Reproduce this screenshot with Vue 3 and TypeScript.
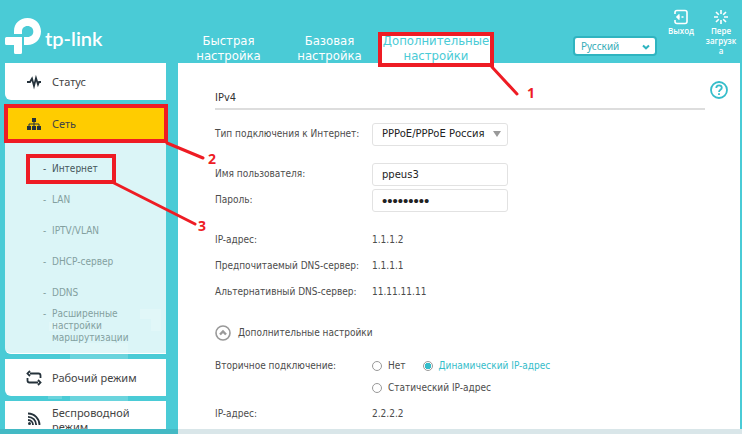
<script setup lang="ts">
import { ref } from 'vue'

interface NavTab {
  first: string
  second: string
  active?: boolean
}

const tabs: NavTab[] = [
  { first: 'Быстрая', second: 'настройка' },
  { first: 'Базовая', second: 'настройка' },
  { first: 'Дополнительные', second: 'настройки', active: true },
]

const submenu: string[] = ['Интернет', 'LAN', 'IPTV/VLAN', 'DHCP-сервер', 'DDNS', 'Расширенные настройки маршрутизации']

const language = ref('Русский')
const connectionType = ref('PPPoE/PPPoE Россия')
const username = ref('ppeus3')
const password = ref('123456789')
const secondary = ref('dynamic')
</script>

<template>
  <div class="app">
    <header class="header">
      <a class="logo" href="#" aria-label="tp-link">
        <svg class="logo-mark" viewBox="0 0 36 36" width="36" height="36" aria-hidden="true">
          <path d="M9 16V13C9 5.500 14.800 0 22.500 0S36 5.800 36 13.500 30 27 22.500 27H19V19H22.500C26 19 28.300 16.700 28.300 13.500S25.900 8 22.500 8 17 10.300 17 13.500V16Z" />
          <path d="M1.500 19H17V34.500Q17 36 15.500 36H10.500Q9 36 9 34.500V27H1.500Q0 27 0 25.500V20.500Q0 19 1.500 19Z" />
        </svg>
        <span class="logo-text">tp-link</span>
      </a>
      <nav class="tabs">
        <a v-for="tab in tabs" :key="tab.first" href="#" class="tab" :class="{ active: tab.active }">
          {{ tab.first }}<br />{{ tab.second }}
        </a>
      </nav>
      <div class="tools">
        <div class="language">
          <select v-model="language" aria-label="Язык">
            <option>Русский</option>
          </select>
          <svg class="chevron" viewBox="0 0 8 6" width="8" height="6" aria-hidden="true"><path d="M1 1.500 4 4.300 7 1.500" /></svg>
        </div>
        <button type="button" class="tool">
          <svg viewBox="0 0 16 16" width="16" height="16" aria-hidden="true">
            <path d="M2 5V3.500Q2 1.500 4 1.500H12Q14 1.500 14 3.500V12.500Q14 14.500 12 14.500H4Q2 14.500 2 12.500V11" />
            <path d="M3.500 8H7M8.500 8H10.500M6.500 5.500 4 8 6.500 10.500" />
          </svg>
          <span>Выход</span>
        </button>
        <button type="button" class="tool">
          <svg viewBox="0 0 16 16" width="16" height="16" aria-hidden="true">
            <path d="M8 1V5M8 11V15M1 8H5M11 8H15M3 3 5.800 5.800M10.200 10.200 13 13M3 13 5.800 10.200M10.200 5.800 13 3" />
          </svg>
          <span>Пере загрузк а</span>
        </button>
      </div>
    </header>

    <div class="body">
      <aside class="sidebar">
        <svg class="pattern" viewBox="0 0 161 130" width="161" height="130" aria-hidden="true">
          <path d="M135 9H156V31H146V19H135ZM44 22H62V31H44ZM65 43H123V130H77V125H65ZM43 93H57V99H43Z" />
        </svg>
        <a href="#" class="menu">
          <svg viewBox="0 0 16 16" width="16" height="16" aria-hidden="true"><path class="line" d="M1 8H4L6 4.500 8 12 10 4 12 10.500 13 8H15" /></svg>
          <span>Статус</span>
        </a>
        <a href="#" class="menu current">
          <svg viewBox="0 0 16 16" width="16" height="16" aria-hidden="true">
            <path d="M6 2H10V6H6ZM1 10H5V14H1ZM6 10H10V14H6ZM11 10H15V14H11Z" />
            <path class="thin" d="M8 6V10M3 10V8H13V10" />
          </svg>
          <span>Сеть</span>
        </a>
        <ul class="submenu">
          <li v-for="(item, index) in submenu" :key="item">
            <a href="#" :class="{ selected: index === 0 }"><span class="dash">-</span><span>{{ item }}</span></a>
          </li>
        </ul>
        <a href="#" class="menu">
          <svg viewBox="0 0 16 16" width="16" height="16" aria-hidden="true">
            <path class="line" d="M4 3.500H12.500Q14.500 3.500 14.500 5.500V8M12 12.500H3.500Q1.500 12.500 1.500 10.500V8M4 1 1.500 3.500 4 6M12 10 14.500 12.500 12 15" />
          </svg>
          <span>Рабочий режим</span>
        </a>
        <a href="#" class="menu wireless">
          <svg viewBox="0 0 16 16" width="16" height="16" aria-hidden="true">
            <path class="line" d="M2 2.500A11.500 11.500 0 0 1 13.500 14M2 5.800A8.200 8.200 0 0 1 10.200 14M2 9A5 5 0 0 1 7 14" />
            <circle cx="3.500" cy="12.500" r="1.500" />
          </svg>
          <span>Беспроводной режим</span>
        </a>
      </aside>

      <main class="content">
        <div class="title-row">
          <h1>IPv4</h1>
          <button type="button" class="help" aria-label="Справка">
            <svg viewBox="0 0 18 18" width="18" height="18" aria-hidden="true">
              <circle cx="9" cy="9" r="8" />
              <path d="M6.300 7C6.300 5.300 7.400 4.300 9 4.300S11.800 5.300 11.800 6.800C11.800 8.800 9 8.800 9 11M9 12.300V14" />
            </svg>
          </button>
        </div>
        <form class="form" @submit.prevent>
          <section class="group">
            <div class="row">
              <label for="type">Тип подключения к Интернет:</label>
              <div class="dropdown">
                <select id="type" v-model="connectionType" class="field">
                  <option>PPPoE/PPPoE Россия</option>
                </select>
                <svg class="arrow" viewBox="0 0 8 6" width="8" height="6" aria-hidden="true"><path d="M0 0H8L4 6Z" /></svg>
              </div>
            </div>
          </section>
          <section class="group">
            <div class="row">
              <label for="user">Имя пользователя:</label>
              <input id="user" v-model="username" class="field" type="text" />
            </div>
            <div class="row">
              <label for="pass">Пароль:</label>
              <input id="pass" v-model="password" class="field" type="password" />
            </div>
          </section>
          <section class="group">
            <div class="row"><span>IP-адрес:</span><span>1.1.1.2</span></div>
            <div class="row"><span>Предпочитаемый DNS-сервер:</span><span>1.1.1.1</span></div>
            <div class="row"><span>Альтернативный DNS-сервер:</span><span>11.11.11.11</span></div>
          </section>
          <button type="button" class="more">
            <svg viewBox="0 0 16 16" width="16" height="16" aria-hidden="true">
              <circle cx="8" cy="8" r="7" />
              <path class="caret" d="M5 9.500 8 6.500 11 9.500" />
            </svg>
            <span>Дополнительные настройки</span>
          </button>
          <div class="row options">
            <span>Вторичное подключение:</span>
            <div class="radios">
              <label><input v-model="secondary" type="radio" name="secondary" value="none" />Нет</label>
              <label class="on"><input v-model="secondary" type="radio" name="secondary" value="dynamic" />Динамический IP-адрес</label>
              <label><input v-model="secondary" type="radio" name="secondary" value="static" />Статический IP-адрес</label>
            </div>
          </div>
          <div class="row"><span>IP-адрес:</span><span>2.2.2.2</span></div>
        </form>
      </main>
    </div>
    <div class="bottom-bar"></div>

    <svg class="notes" viewBox="0 0 742 434" width="742" height="434">
      <rect x="380" y="34" width="112" height="31" />
      <rect x="6" y="106" width="160" height="35" />
      <rect x="28" y="156" width="86" height="26" />
      <path d="M492 67 517 94M167 143 203 158M114 183 195 224" />
      <text x="527" y="98">1</text>
      <text x="208" y="164">2</text>
      <text x="198" y="231">3</text>
    </svg>
  </div>
</template>

<style>
body {
  margin: 0;
}
</style>

<style scoped>
* {
  box-sizing: border-box;
}
.app {
  position: relative;
  display: flex;
  flex-direction: column;
  height: 100vh;
  overflow: hidden;
  background: #4acbd6;
  color: #4c4c4c;
  font: 10px/14px "DejaVu Sans Condensed", Tahoma, sans-serif;
}
a {
  color: inherit;
  text-decoration: none;
}
button {
  padding: 0;
  border: 0;
  background: none;
  color: inherit;
  font: inherit;
}
.header {
  display: flex;
  flex: none;
  height: 63px;
  padding-left: 5px;
  color: #fff;
}
.logo {
  display: flex;
  flex: none;
  gap: 4px;
  width: 175px;
  padding-top: 18px;
}
.logo-mark {
  fill: #fff;
}
.logo-text {
  font: 600 20px/40px Lato, sans-serif;
}
.tabs {
  display: flex;
  align-items: flex-end;
  flex: none;
  gap: 4px;
}
.tab {
  width: 97px;
  font: 13px/15px "DejaVu Sans Condensed", Tahoma, sans-serif;
  text-align: center;
  white-space: nowrap;
}
.tab.active {
  width: 108px;
  background: #fff;
  color: #4acbd6;
}
.tools {
  display: flex;
  flex: 1;
  justify-content: flex-end;
  padding-right: 1px;
}
.language {
  position: relative;
  align-self: flex-start;
  margin: 36px 4px 0 0;
}
.language select {
  width: 84px;
  height: 20px;
  padding: 0 6px;
  border: 2px solid #2fb4c0;
  border-radius: 4px;
  appearance: none;
  background: #fff;
  color: #35adb8;
  font: 10px/14px "Noto Sans", sans-serif;
}
.chevron {
  position: absolute;
  top: 8px;
  right: 7px;
  fill: none;
  stroke: #2fb4c0;
  stroke-width: 2;
}
.tool {
  display: flex;
  flex-direction: column;
  align-items: center;
  width: 40px;
  padding-top: 9px;
  font: 600 8px/10px "Open Sans", sans-serif;
}
.tool span {
  width: 34px;
  padding-top: 1px;
  text-align: center;
}
.tool svg {
  fill: none;
  stroke: #fff;
  stroke-width: 1.6;
}
.body {
  display: flex;
  flex: 1;
  gap: 12px;
  min-height: 0;
  padding: 0 2px 0 5px;
}
.sidebar {
  position: relative;
  display: flex;
  flex: none;
  flex-direction: column;
  gap: 5px;
  width: 161px;
  overflow: hidden;
}
.pattern {
  position: absolute;
  top: 237px;
  left: 0;
  fill: rgba(255, 255, 255, 0.18);
}
.menu {
  position: relative;
  display: flex;
  flex: none;
  align-items: center;
  gap: 10px;
  min-height: 37px;
  padding-left: 21px;
  border-radius: 0 0 0 6px;
  background: #fff;
  color: #444;
  font: 11px/14px "Noto Sans", sans-serif;
}
.menu svg {
  flex: none;
  fill: #25323b;
}
.menu .line,
.menu .thin {
  fill: none;
  stroke: #25323b;
  stroke-width: 1.8;
}
.menu .thin {
  stroke-width: 1;
}
.menu.current {
  border-radius: 0;
  background: #fc0;
}
.menu.wireless {
  align-items: flex-start;
  padding-top: 5px;
}
.menu.wireless svg {
  margin-top: 5px;
}
.submenu {
  position: relative;
  flex: none;
  margin: -5px 0 0;
  padding: 11px 20px 9px 38px;
  border-bottom: 1px solid #fff;
  border-radius: 0 0 0 6px;
  background: rgba(255, 255, 255, 0.8);
  color: #83a09f;
  list-style: none;
}
.submenu li {
  display: flex;
  align-items: center;
  min-height: 31px;
}
.submenu a {
  display: flex;
  align-items: baseline;
  line-height: 12px;
}
.dash {
  flex: none;
  width: 9px;
}
.submenu .selected {
  color: #45565a;
}
.content {
  flex: 1;
  min-width: 0;
  padding: 15px 12px 0 37px;
  background: #fff;
}
.title-row {
  display: flex;
  align-items: flex-start;
  gap: 5px;
  height: 32px;
}
h1 {
  flex: 1;
  margin: 0;
  padding: 13px 0 3px;
  border-bottom: 2px solid #ddd;
  color: #333;
  font: 11px/14px "DejaVu Sans Condensed", Tahoma, sans-serif;
}
.help svg {
  display: block;
  margin-top: 3px;
  fill: none;
  stroke: #35bdca;
  stroke-width: 1.8;
}
.form {
  padding-top: 11px;
}
.group {
  margin-bottom: 14px;
}
.row {
  display: grid;
  grid-template-columns: 157px 1fr;
  align-items: center;
  min-height: 26px;
}
.field {
  display: block;
  width: 136px;
  height: 23px;
  padding: 0 9px;
  border: 1px solid #e2e2e2;
  border-radius: 3px;
  appearance: none;
  background: #fff;
  color: #222;
  font: 10px/14px "DejaVu Sans", Verdana, sans-serif;
}
.field[type='password'] {
  font: 15px/15px "Liberation Sans", sans-serif;
}
.dropdown {
  position: relative;
  width: 136px;
}
.arrow {
  position: absolute;
  top: 8px;
  right: 7px;
  fill: #999;
}
.more {
  display: flex;
  align-items: center;
  gap: 7px;
  height: 28px;
}
.more svg {
  fill: none;
  stroke: #999;
  stroke-width: 1.6;
}
.more .caret {
  stroke-width: 2.4;
}
.options {
  align-items: start;
  padding: 8px 0 2px;
  line-height: 22px;
}
.radios {
  display: flex;
  flex-wrap: wrap;
  column-gap: 17px;
  max-width: 200px;
}
.radios label {
  display: flex;
  align-items: center;
  gap: 6px;
  white-space: nowrap;
}
.radios .on {
  color: #35bdca;
}
.radios input {
  width: 10px;
  height: 10px;
  margin: 0;
  border: 1px solid #999;
  border-radius: 50%;
  appearance: none;
}
.radios input:checked {
  background: radial-gradient(circle, #35bdca 3px, #fff 3px);
}
.bottom-bar {
  flex: none;
  height: 5px;
  background: linear-gradient(90deg, #43b9c4 178px, #d9e6e9 178px);
}
.notes {
  position: absolute;
  top: 0;
  left: 0;
  fill: none;
  stroke: #ee1c24;
  stroke-width: 4;
  stroke-linecap: round;
  pointer-events: none;
}
.notes path {
  stroke-width: 3;
}
.notes text {
  fill: #ee1c24;
  stroke: none;
  font: bold 14px "Open Sans", sans-serif;
}
</style>
